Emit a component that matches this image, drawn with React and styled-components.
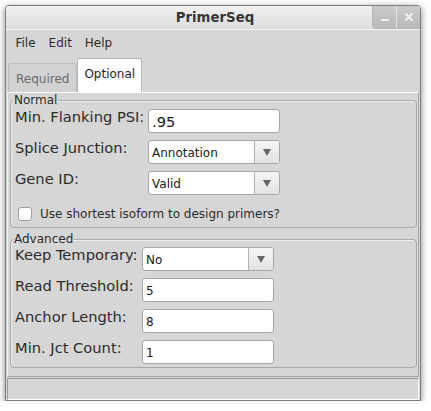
import React from "react";
import styled, { createGlobalStyle } from "styled-components";

const GlobalStyle = createGlobalStyle`
  html, body {
    margin: 0;
    padding: 0;
    background: #ffffff;
  }
  body {
    font-family: "DejaVu Sans", "Liberation Sans", sans-serif;
    color: #2e2e2e;
  }
`;

const Page = styled.div`
  padding: 5px 0 0 5px;
`;

const Window = styled.div`
  width: 416px;
  height: 396px;
  box-sizing: border-box;
  border: 1px solid #7d7d7d;
  border-radius: 4px 4px 0 0;
  background: #d6d6d6;
  box-shadow: 0 2px 7px rgba(0, 0, 0, 0.5);
  display: flex;
  flex-direction: column;
  overflow: hidden;
`;

const TitleBar = styled.div`
  position: relative;
  height: 24px;
  flex: none;
  display: flex;
  align-items: center;
  justify-content: center;
  background: linear-gradient(#f2f2f2, #dcdcdc);
  border-bottom: 1px solid #f4f4f4;
  box-sizing: border-box;
`;

const Title = styled.span`
  font-weight: bold;
  font-size: 13.33px;
  color: #363636;
  padding-left: 4px;
`;

const WindowButtons = styled.div`
  position: absolute;
  top: 0;
  right: 0;
  display: flex;
  height: 22px;
  border-radius: 0 0 0 4px;
  overflow: hidden;
  border-left: 1px solid #b8b8b8;
  border-bottom: 1px solid #b0b0b0;
`;

const WinButton = styled.div`
  width: 23px;
  display: flex;
  align-items: center;
  justify-content: center;
  background: linear-gradient(#cbcbcb, #b9b9b9);
  border-left: ${(p) => (p.$divider ? "1px solid #e2e2e2" : "none")};
`;

const MenuBar = styled.div`
  height: 26px;
  flex: none;
  display: flex;
  align-items: center;
  padding-left: 3px;
  padding-bottom: 1px;
  box-sizing: border-box;
`;

const MenuItem = styled.span`
  font-size: 12px;
  padding: 0 6.5px;
  color: #2a2a2a;
`;

const TabRow = styled.div`
  height: 36px;
  flex: none;
  display: flex;
  align-items: flex-end;
  padding-left: 2px;
`;

const Tab = styled.div`
  height: ${(p) => (p.$active ? "34px" : "29px")};
  box-sizing: border-box;
  padding: 0 ${(p) => (p.$active ? "6px" : "7px")};
  display: flex;
  align-items: center;
  font-size: 12px;
  color: ${(p) => (p.$active ? "#1e1e1e" : "#6c6c6c")};
  background: ${(p) => (p.$active ? "#ffffff" : "#d2d2d2")};
  border: 1px solid ${(p) => (p.$active ? "#b6b6b6" : "#bdbdbd")};
  border-bottom: none;
  border-radius: 3px 3px 0 0;
  padding-top: ${(p) => (p.$active ? "0" : "2px")};
  ${(p) => (p.$active ? "padding-bottom: 3px;" : "")}
`;

const Panel = styled.div`
  flex: 1;
  margin: 0 1px;
  box-sizing: border-box;
  border: 1px solid #a9a9a9;
  border-top-color: #ffffff;
  border-left-color: #f2f2f2;
  padding: 0 1px 0 2px;
  display: flex;
  flex-direction: column;
`;

const Group = styled.fieldset`
  margin: ${(p) => (p.$first ? "0" : "4px")} 0 0 0;
  padding: ${(p) => p.$pad};
  border: 1px solid #a9a9a9;
  border-radius: 4px;
  box-shadow: inset 1px 1px 0 rgba(255, 255, 255, 0.55);
  min-width: 0;
`;

const Legend = styled.legend`
  font-size: 12px;
  padding: 0 1px;
  margin-left: 2px;
  line-height: 14px;
  color: #2a2a2a;
`;

const Form = styled.div`
  display: grid;
  grid-template-columns: ${(p) => p.$labelWidth}px 132px;
  row-gap: 7px;
`;

const Label = styled.span`
  font-size: 14.67px;
  line-height: 15px;
  padding-left: 4px;
  color: #2c2c2c;
  white-space: nowrap;
`;

const Field = styled.div`
  height: 24px;
  box-sizing: border-box;
  background: #ffffff;
  border: 1px solid #a7a7a7;
  border-radius: 3px;
  display: flex;
  align-items: center;
  overflow: hidden;
`;

const FieldText = styled.span`
  flex: 1;
  font-size: ${(p) => (p.$big ? "14.67px" : "12px")};
  padding-left: 3px;
  padding-top: ${(p) => (p.$big ? "1px" : "2px")};
  color: #202020;
`;

const ArrowButton = styled.div`
  width: 24px;
  height: 100%;
  border-left: 1px solid #b4b4b4;
  background: linear-gradient(#f6f6f6, #e2e2e2);
  display: flex;
  align-items: center;
  justify-content: center;
`;

const Arrow = styled.div`
  width: 0;
  height: 0;
  border-left: 4px solid transparent;
  border-right: 4px solid transparent;
  border-top: 7px solid #676767;
`;

const CheckRow = styled.label`
  grid-column: 1 / 3;
  height: 24px;
  display: flex;
  align-items: center;
  gap: 8px;
  padding-left: 7px;
  font-size: 12px;
  white-space: nowrap;
  color: #2c2c2c;
`;

const CheckBox = styled.span`
  flex: none;
  width: 14px;
  height: 14px;
  box-sizing: border-box;
  background: #ffffff;
  border: 1px solid #9e9e9e;
  border-radius: 3px;
`;

const StatusBar = styled.div`
  height: 22px;
  flex: none;
  margin: 1px 1px 0;
  box-sizing: border-box;
  border: 1px solid #9a9a9a;
  border-right-color: #ffffff;
  border-bottom-color: #ffffff;
`;

const TextField = ({ value, big }) => (
  <Field>
    <FieldText $big={big}>{value}</FieldText>
  </Field>
);

const Combo = ({ value }) => (
  <Field>
    <FieldText>{value}</FieldText>
    <ArrowButton>
      <Arrow />
    </ArrowButton>
  </Field>
);

const App = () => {
  return (
    <Page>
      <GlobalStyle />
      <Window>
        <TitleBar>
          <Title>PrimerSeq</Title>
          <WindowButtons>
            <WinButton>
              <svg width="10" height="10" viewBox="0 0 10 10">
                <rect x="1" y="7" width="8" height="2" fill="#efefef" />
              </svg>
            </WinButton>
            <WinButton $divider>
              <svg width="10" height="10" viewBox="0 0 10 10">
                <path d="M1.5 1.5 L8.5 8.5 M8.5 1.5 L1.5 8.5" stroke="#efefef" strokeWidth="2" />
              </svg>
            </WinButton>
          </WindowButtons>
        </TitleBar>
        <MenuBar>
          <MenuItem>File</MenuItem>
          <MenuItem>Edit</MenuItem>
          <MenuItem>Help</MenuItem>
        </MenuBar>
        <TabRow>
          <Tab>Required</Tab>
          <Tab $active>Optional</Tab>
        </TabRow>
        <Panel>
          <Group $first $pad="2px 0 1px 0">
            <Legend>Normal</Legend>
            <Form $labelWidth={137}>
              <Label>Min. Flanking PSI:</Label>
              <TextField value=".95" big />
              <Label>Splice Junction:</Label>
              <Combo value="Annotation" />
              <Label>Gene ID:</Label>
              <Combo value="Valid" />
              <CheckRow>
                <CheckBox />
                Use shortest isoform to design primers?
              </CheckRow>
            </Form>
          </Group>
          <Group $pad="1px 0 3px 0">
            <Legend>Advanced</Legend>
            <Form $labelWidth={131}>
              <Label>Keep Temporary:</Label>
              <Combo value="No" />
              <Label>Read Threshold:</Label>
              <TextField value="5" />
              <Label>Anchor Length:</Label>
              <TextField value="8" />
              <Label>Min. Jct Count:</Label>
              <TextField value="1" />
            </Form>
          </Group>
        </Panel>
        <StatusBar />
      </Window>
    </Page>
  );
};

export default App;
